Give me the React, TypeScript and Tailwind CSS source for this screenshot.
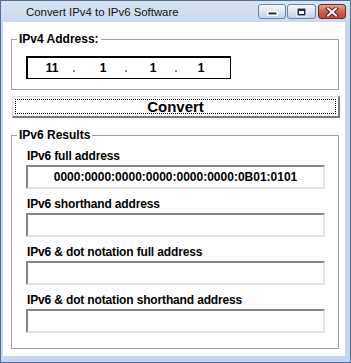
import type { ReactNode } from "react";

function CaptionButton({ kind }: { kind: "min" | "max" | "close" }) {
  if (kind === "close") {
    return (
      <div className="w-[28px] h-[15px] ml-[2px] rounded-[3px] border border-[#6b2a22] bg-gradient-to-b from-[#e9a196] via-[#cf5f50] to-[#c5473a] flex items-center justify-center">
        <svg width="14" height="10" viewBox="0 0 14 10">
          <path d="M3 1.5 L11 8.5 M11 1.5 L3 8.5" stroke="#5a1e18" strokeWidth="4" strokeLinecap="square" />
          <path d="M3 1.5 L11 8.5 M11 1.5 L3 8.5" stroke="#ffffff" strokeWidth="2" strokeLinecap="square" />
        </svg>
      </div>
    );
  }
  return (
    <div
      className={
        kind === "min"
          ? "w-[28px] h-[15px] rounded-[3px] border border-[#6f84a1] bg-gradient-to-b from-[#f3f7fc] via-[#dbe5f2] to-[#c2d2e7] flex items-end justify-center pb-[2px]"
          : "w-[29px] h-[15px] ml-[1px] rounded-[3px] border border-[#6f84a1] bg-gradient-to-b from-[#f3f7fc] via-[#dbe5f2] to-[#c2d2e7] flex items-center justify-center"
      }
    >
      {kind === "min" ? (
        <svg width="11" height="5" viewBox="0 0 11 5">
          <rect x="0.5" y="0.5" width="10" height="4" fill="#ffffff" stroke="#ffffff" />
          <rect x="1.5" y="1.5" width="8" height="2" fill="#1d2c48" />
        </svg>
      ) : (
        <svg width="11" height="10" viewBox="0 0 11 10">
          <rect x="0.5" y="0.5" width="10" height="9" fill="#ffffff" />
          <rect x="1.5" y="1.5" width="8" height="7" fill="#1d2c48" />
          <rect x="3" y="4" width="5" height="3" fill="#ffffff" />
        </svg>
      )}
    </div>
  );
}

function GroupBox({ title, className, children }: { title: string; className: string; children: ReactNode }) {
  return (
    <fieldset className={`border border-[#a0a0a0] ${className}`}>
      <legend className="ml-[5px] px-[2px] pb-[1px] text-[12px] leading-[14px] font-bold">{title}</legend>
      {children}
    </fieldset>
  );
}

// the little grey separators between octets
function Dot({ className }: { className: string }) {
  return (
    <span className={`flex items-end pb-[6px] ${className}`}>
      <span className="w-[2px] h-[2px] bg-[#8a8a8a]" />
    </span>
  );
}

function Octet({ value, className }: { value: string; className: string }) {
  return <span className={`w-[20px] flex items-center justify-center ${className}`}>{value}</span>;
}

function ResultField({ label, value }: { label: string; value?: string }) {
  return (
    <div className="ml-[14px] mr-[13px]">
      <div className="ml-[1px] text-[12px] leading-[14px] font-bold tracking-[-0.15px]">{label}</div>
      <div className="mt-[2px] h-[24px] border-2 border-t-[#858585] border-l-[#858585] border-b-[#e3e3e3] border-r-[#e3e3e3] bg-white flex items-center justify-center text-[12px] font-bold">
        {value}
      </div>
    </div>
  );
}

export default function App() {
  return (
    <div className="w-[351px] h-[363px] flex flex-col bg-[#c4d6ed] border border-[#4f6f96] font-['Liberation_Sans',Arial,sans-serif] text-black overflow-hidden">
      {/* title bar */}
      <div className="h-[21px] flex items-start bg-gradient-to-b from-[#d7e3f2] to-[#c9d9ee]">
        <div className="pl-[25px] pt-[5px] text-[11.4px] leading-[13px] text-[#111]">Convert IPv4 to IPv6 Software</div>
        <div className="ml-auto mr-[4px] mt-[3px] flex">
          <CaptionButton kind="min" />
          <CaptionButton kind="max" />
          <CaptionButton kind="close" />
        </div>
      </div>

      {/* client area */}
      <div className="flex-1 ml-[2px] mr-[5px] mb-[6px] bg-white flex flex-col">
        <GroupBox title="IPv4 Address:" className="mt-[10px] ml-[8px] mr-[6px] pb-[10px]">
          <div className="mt-[9px] ml-[14px] w-[205px] h-[23px] border border-black border-l-2 border-t-2 flex items-stretch text-[12px] font-bold">
            <Octet value="11" className="ml-[14px]" />
            <Dot className="ml-[11px]" />
            <Octet value="1" className="ml-[18px]" />
            <Dot className="ml-[12px]" />
            <Octet value="1" className="ml-[16px]" />
            <Dot className="ml-[12px]" />
            <Octet value="1" className="ml-[14px]" />
          </div>
        </GroupBox>

        <button className="mt-[6px] ml-[9px] mr-[5px] h-[22px] p-[2px] bg-white border border-t-[#dcdcdc] border-l-[#dcdcdc] border-b-2 border-r-2 border-b-[#7a7a7a] border-r-[#7a7a7a]">
          <div className="h-full border border-dotted border-black flex items-center justify-center text-[15px] font-bold leading-none">
            Convert
          </div>
        </button>

        <GroupBox title="IPv6 Results" className="mt-[10px] ml-[8px] mr-[6px] pb-[15px]">
          <div className="mt-[6px] flex flex-col gap-[8px]">
            <ResultField label="IPv6 full address" value="0000:0000:0000:0000:0000:0000:0B01:0101" />
            <ResultField label="IPv6 shorthand address" />
            <ResultField label="IPv6 & dot notation full address" />
            <ResultField label="IPv6 & dot notation shorthand address" />
          </div>
        </GroupBox>
      </div>
    </div>
  );
}
